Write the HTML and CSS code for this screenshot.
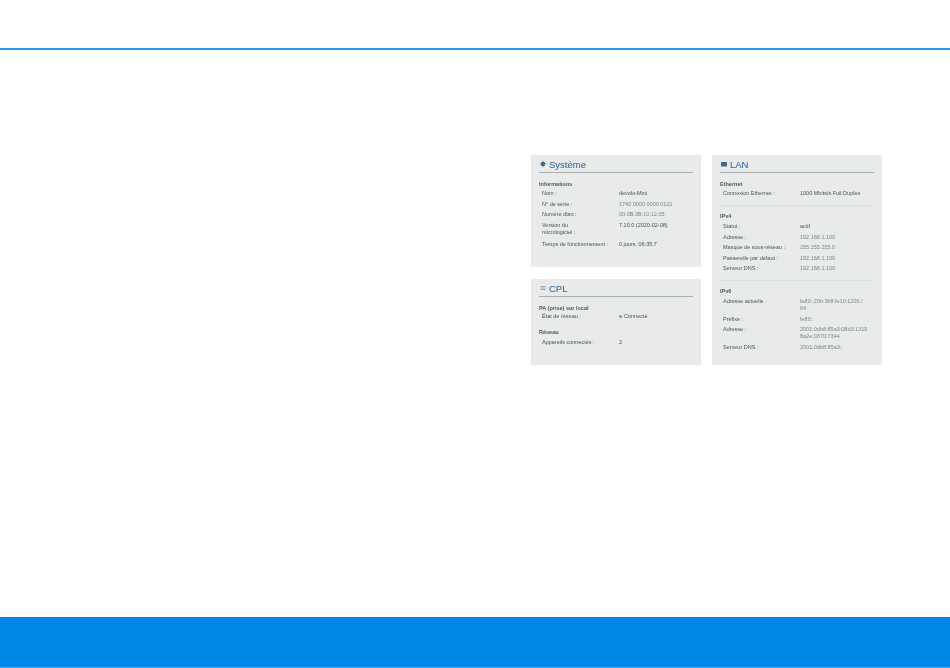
FILE: index.html
```html
<!DOCTYPE html>
<html lang="fr">
<head>
<meta charset="utf-8">
<title>Aperçu</title>
<link rel="stylesheet" href="styles.css">
</head>
<body>
<header class="top"></header>
<main class="main">
  <div class="figure">
    <div class="col">
      <section class="card card-sys">
        <h2 class="title"><svg class="ico" viewBox="0 0 8 8"><circle cx="4" cy="4" r="2.2" fill="#3c6a8c"/><path d="M4 .8v6.400M.8 4h6.400" stroke="#3c6a8c" stroke-width=".6"/></svg>Système</h2>
        <h3 class="sub">Informations</h3>
        <dl class="rows">
          <div class="row"><dt>Nom :</dt><dd>devolo-Mini</dd></div>
          <div class="row"><dt>N° de série :</dt><dd class="pale">1740 0000 0000 0121</dd></div>
          <div class="row"><dt>Numéro dlan :</dt><dd class="pale">00:0B:3B:10:12:05</dd></div>
          <div class="row row-wide"><dt>Version du<br>micrologiciel :</dt><dd>7.10.0 (2020-02-08)</dd></div>
          <div class="row"><dt>Temps de fonctionnement :</dt><dd>0 jours, 06:35:7</dd></div>
        </dl>
      </section>
      <section class="card card-cpl">
        <h2 class="title"><svg class="ico" viewBox="0 0 8 8"><path d="M1.500 2.500h5M1.500 4h5M1.500 5.500h5" stroke="#778088" stroke-width=".6"/></svg>CPL</h2>
        <h3 class="sub tight">PA (prise) sur local</h3>
        <dl class="rows">
          <div class="row"><dt>État de réseau :</dt><dd><span class="dot"></span>Connecté</dd></div>
        </dl>
        <h3 class="sub gap">Réseau</h3>
        <dl class="rows">
          <div class="row"><dt>Appareils connectés :</dt><dd>2</dd></div>
        </dl>
      </section>
    </div>
    <section class="card card-lan">
      <h2 class="title"><svg class="ico" viewBox="0 0 8 8"><path d="M1 2h6v4.500H1z" fill="#3c6a8c"/></svg>LAN</h2>
      <h3 class="sub">Ethernet</h3>
      <dl class="rows">
        <div class="row"><dt>Connexion Ethernet :</dt><dd>1000 Mbits/s Full Duplex</dd></div>
      </dl>
      <hr class="sep">
      <h3 class="sub roomy">IPv4</h3>
      <dl class="rows">
        <div class="row"><dt>Statut :</dt><dd>actif</dd></div>
        <div class="row"><dt>Adresse :</dt><dd class="pale">192.168.1.100</dd></div>
        <div class="row"><dt>Masque de sous-réseau :</dt><dd class="pale">255.255.255.0</dd></div>
        <div class="row"><dt>Passerelle par défaut :</dt><dd class="pale">192.168.1.100</dd></div>
        <div class="row"><dt>Serveur DNS :</dt><dd class="pale">192.168.1.100</dd></div>
      </dl>
      <hr class="sep">
      <h3 class="sub roomy">IPv6</h3>
      <dl class="rows">
        <div class="row"><dt>Adresse actuelle :</dt><dd class="pale">fe80::20b:3bff:fe10:1205 /<br>64</dd></div>
        <div class="row"><dt>Préfixe :</dt><dd class="pale">fe80::</dd></div>
        <div class="row"><dt>Adresse :</dt><dd class="pale">2001:0db8:85a3:08d3:1319<br>8a2e:0370:7344</dd></div>
        <div class="row"><dt>Serveur DNS :</dt><dd class="pale">2001:0db8:85a3::</dd></div>
      </dl>
    </section>
  </div>
</main>
<footer class="bottom"></footer>
</body>
</html>
```
FILE: styles.css
```css
* { box-sizing: border-box; }
html, body { margin: 0; height: 100%; }
body {
  display: flex;
  flex-direction: column;
  height: 668px;
  background: #fff;
  font-family: "Liberation Sans", Arial, sans-serif;
  overflow: hidden;
}
.top {
  height: 50px;
  border-bottom: 2px solid #2a96e8;
  flex: none;
}
.main {
  flex: 1;
  padding: 105px 0 0 531px;
}
.figure {
  display: flex;
  gap: 11px;
  filter: blur(0.6px);
}
.col {
  display: flex;
  flex-direction: column;
  gap: 12px;
  width: 170px;
}
.card {
  background: #e9ebea;
  padding: 0 8px;
  color: #4c5257;
  font-size: 5.500px;
  line-height: 7px;
}
.card-sys { height: 112px; }
.card-cpl { height: 86px; }
.card-lan { width: 170px; height: 210px; }
.title {
  display: flex;
  align-items: center;
  gap: 2px;
  margin: 0 0 8px;
  height: 18px;
  border-bottom: 1px solid #a8aeae;
  color: #246296;
  font-size: 9.500px;
  font-weight: 400;
  padding-top: 1px;
}
.ico { width: 8px; height: 8px; flex: none; }
.sub {
  margin: 0 0 2px;
  font-size: 5.500px;
  line-height: 7px;
  font-weight: 700;
  color: #50565a;
}
.sub.tight { margin-top: 4px; margin-bottom: 1px; }
.sub.gap { margin-top: 9px; margin-bottom: 3px; }
.sub.roomy { margin-bottom: 3px; }
.rows { margin: 0; }
.row {
  display: grid;
  grid-template-columns: 77px 1fr;
  padding-left: 3px;
  margin-bottom: 3.500px;
}
.row-wide { margin-bottom: 5px; }
.row dt, .row dd { margin: 0; }
.pale { color: #7c848a; }
.dot {
  display: inline-block;
  width: 3px;
  height: 3px;
  margin-right: 2px;
  border-radius: 50%;
  background: #8aa83a;
}
.sep {
  margin: 8px 0 7px;
  border: 0;
  border-top: 1px solid #dcdfdf;
}
.bottom {
  flex: none;
  height: 51px;
  border-bottom: 1px solid #4aa8ee;
  background: #0088e8;
}
```
